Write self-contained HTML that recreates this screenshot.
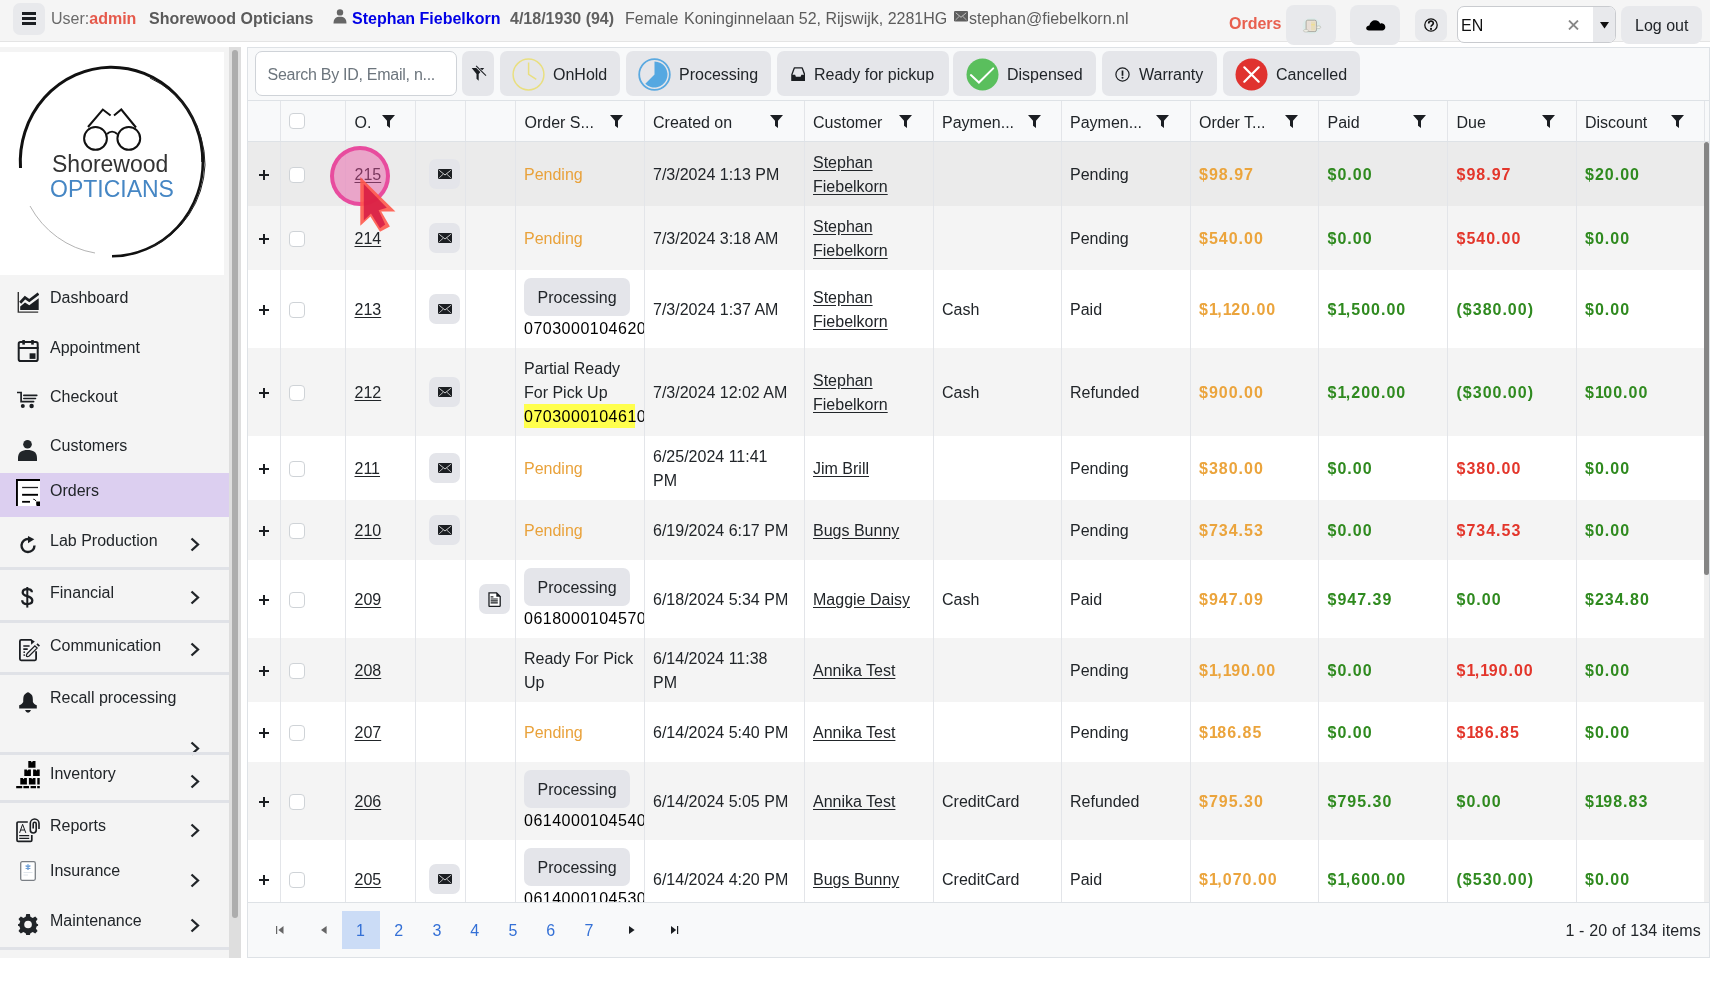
<!DOCTYPE html>
<html><head><meta charset="utf-8"><title>Orders</title><style>*{box-sizing:border-box}
html,body{margin:0;padding:0}
body{width:1710px;height:981px;overflow:hidden;position:relative;font-family:"Liberation Sans",sans-serif;font-size:16px;color:#212529;background:#fff}
.a{position:absolute}
.t{white-space:nowrap}
u{text-decoration:underline;text-underline-offset:2px}
b{font-weight:700}
.am{letter-spacing:1px}
.o{font-style:normal;letter-spacing:-0.5px}
</style></head><body><div id="root" style="position:absolute;left:0;top:0;width:1710px;height:981px;overflow:hidden;will-change:transform">
<div class="a" style="left:0;top:0;width:1710px;height:41px;background:#f5f5f5"></div>
<div class="a" style="left:0;top:41px;width:1710px;height:1px;background:#e4e4e4"></div>
<div class="a" style="left:13px;top:3px;width:32px;height:32px;background:#e8e9ec;border-radius:7px"></div>
<div class="a" style="left:22px;top:12px;width:14px;height:3px;background:#1b1e22"></div>
<div class="a" style="left:22px;top:17px;width:14px;height:3px;background:#1b1e22"></div>
<div class="a" style="left:22px;top:22px;width:14px;height:3px;background:#1b1e22"></div>
<div class="a t " style="left:51px;top:8.96px;font-size:16px;line-height:20px;color:#6a6a6a">User:<b style="color:#e5594b">admin</b></div>
<div class="a t " style="left:149px;top:8.96px;font-size:16px;line-height:20px;color:#5a5a5a"><b>Shorewood Opticians</b></div>
<svg class="a" style="left:333px;top:9px" width="14" height="15" viewBox="0 0 14 15"><circle cx="7" cy="3.4" r="3.2" fill="#666"/><path d="M0.5 14.5 C0.5 9.5 3 7.8 7 7.8 C11 7.8 13.5 9.5 13.5 14.5 Z" fill="#666"/></svg>
<div class="a t " style="left:352px;top:8.96px;font-size:16px;line-height:20px;color:#0000e6"><b>Stephan Fiebelkorn</b></div>
<div class="a t " style="left:510px;top:8.96px;font-size:16px;line-height:20px;color:#606060"><b>4/18/1930 (94)</b></div>
<div class="a t " style="left:625px;top:8.96px;font-size:16px;line-height:20px;color:#5c5c5c">Female</div>
<div class="a t " style="left:684px;top:8.96px;font-size:16px;line-height:20px;color:#5c5c5c">Koninginnelaan 52, Rijswijk, 2281HG</div>
<svg class="a" style="left:954px;top:11px" width="14" height="10.5" viewBox="0 0 14 10.5"><rect x="0" y="0" width="14" height="10.5" rx="1.3" fill="#5e5e5e"/><path d="M1.8 1.8 L7 6.3 L12.2 1.8" stroke="#f0f0f0" stroke-width="0.7" fill="none"/><path d="M1.5 9 L5.3 5.3 M12.5 9 L8.7 5.3" stroke="#f0f0f0" stroke-width="0.6" fill="none"/></svg>
<div class="a t " style="left:969px;top:8.96px;font-size:16px;line-height:20px;color:#5c5c5c">stephan@fiebelkorn.nl</div>
<div class="a t " style="left:1229px;top:14.46px;font-size:16px;line-height:20px;color:#e8604f"><b>Orders</b></div>
<div class="a" style="left:1286px;top:5px;width:50px;height:40px;background:#e8e9ec;border-radius:8px"></div>
<svg class="a" style="left:1301px;top:16px" width="24" height="20" viewBox="0 0 24 20"><ellipse cx="10.5" cy="10" rx="9" ry="8" fill="#d3ede8" opacity=".55"/><rect x="5.1" y="4.2" width="10.3" height="11.4" rx="1.6" fill="#ebe3d6" stroke="#9c9a92" stroke-width=".8"/><rect x="6.3" y="5.6" width="3.2" height="8.8" fill="#e7ddd6"/><rect x="10" y="5.6" width="4.1" height="8.8" fill="#e8ddb9"/><rect x="10.2" y="8.2" width="3.6" height="1.1" fill="#f1e08c"/><ellipse cx="5" cy="14.8" rx="2.7" ry="1.2" fill="#f3f3ea" stroke="#a8a8a0" stroke-width=".5"/><ellipse cx="17.6" cy="11.2" rx="2.2" ry="1.3" fill="#f3f3ea" stroke="#a8a8a0" stroke-width=".5"/></svg>
<div class="a" style="left:1350px;top:5px;width:50px;height:40px;background:#e8e9ec;border-radius:8px"></div>
<svg class="a" style="left:1366px;top:20px" width="20" height="11" viewBox="0 0 20 11"><path d="M3 10.4 C1.2 10.4 0 9.3 0.2 8 C0.4 6.6 1.8 5.6 3.3 5.6 C4 2.2 6.3 0.3 9 0.3 C11.7 0.3 13.6 2 14.2 3.8 C15 3.3 15.8 3.2 16.5 3.4 C18.5 3.9 19.5 5.6 19.3 7.5 C19.1 9.3 17.9 10.4 16.3 10.4 Z" fill="#000"/></svg>
<div class="a" style="left:1415px;top:9px;width:32px;height:32px;background:#e8e9ec;border-radius:7px"></div>
<svg class="a" style="left:1424px;top:18px" width="14" height="14" viewBox="0 0 14 14"><circle cx="7" cy="7" r="6.2" stroke="#111" stroke-width="1.3" fill="none"/><path d="M4.7 5.4 C4.7 2.5 9.3 2.5 9.3 5.2 C9.3 7 7 7.1 7 8.8" stroke="#111" stroke-width="1.7" fill="none"/><circle cx="7" cy="10.9" r="1.1" fill="#111"/></svg>
<div class="a" style="left:1457px;top:6px;width:159px;height:37px;background:#fff;border:1px solid #c9cbcf;border-radius:7px;overflow:hidden"><div class="a" style="left:135px;top:0;width:23px;height:37px;background:#e8e9ec"></div></div>
<div class="a t " style="left:1461px;top:16.46px;font-size:16px;line-height:20px;color:#111">EN</div>
<svg class="a" style="left:1568px;top:20px" width="11" height="10" viewBox="0 0 11 10"><path d="M1 0.5 L10 9.5 M10 0.5 L1 9.5" stroke="#888" stroke-width="1.8"/></svg>
<svg class="a" style="left:1600px;top:22px" width="9" height="7" viewBox="0 0 9 7"><path d="M0 0 H9 L4.5 6.5 Z" fill="#111"/></svg>
<div class="a" style="left:1621px;top:6px;width:81px;height:38px;background:#e8e9ec;border-radius:8px"></div>
<div class="a t " style="left:1635px;top:16.46px;font-size:16px;line-height:20px;color:#212529">Log out</div>
<div class="a" style="left:0;top:47px;width:229px;height:911px;background:#f4f4f4"></div>
<div class="a" style="left:229px;top:47px;width:12px;height:911px;background:#dedede"></div>
<div class="a" style="left:232px;top:50px;width:6px;height:868px;background:#adadad;border-radius:3px"></div>
<div class="a" style="left:0;top:52px;width:224px;height:223px;background:#fff"></div>
<svg class="a" style="left:0;top:52px" width="224" height="223" viewBox="0 52 224 223">
<path d="M20.5 168 A91.5 94.5 0 0 1 110 67.2 A91.5 94.5 0 0 1 202.8 162" stroke="#111" stroke-width="3" fill="none"/>
<path d="M202.8 158 A91.5 94.5 0 0 1 112 256.3" stroke="#111" stroke-width="2.6" fill="none"/>
<path d="M150 78 A92 95 0 0 1 205 165 A92 95 0 0 1 150 248" stroke="#222" stroke-width="1" fill="none"/>
<path d="M30 206 A91.5 94.5 0 0 0 95 253" stroke="#aaa" stroke-width="0.9" fill="none"/>
<circle cx="95.5" cy="138.4" r="11.4" stroke="#111" stroke-width="2" fill="none"/>
<circle cx="128.8" cy="138.4" r="11.4" stroke="#111" stroke-width="2" fill="none"/>
<path d="M107 134 C110 131 114 131 117.3 134" stroke="#111" stroke-width="2" fill="none"/>
<path d="M88 127 L102.8 109.5 L110.6 115.5 M136 127.5 L121.3 109.5 L114 115.5" stroke="#111" stroke-width="2" fill="none" stroke-linejoin="miter"/>
</svg>
<div class="a t " style="left:52px;top:150.23px;font-size:23px;line-height:28px;color:#333">Shorewood</div>
<div class="a t " style="left:50px;top:175.33px;font-size:23px;line-height:28px;color:#4586c4">OPTICIANS</div>
<div class="a" style="left:0;top:473px;width:229px;height:44px;background:#dccff0"></div>
<div class="a t " style="left:50px;top:288.16px;font-size:16px;line-height:20px;color:#212529">Dashboard</div>
<div class="a t " style="left:50px;top:337.86px;font-size:16px;line-height:20px;color:#212529">Appointment</div>
<div class="a t " style="left:50px;top:387.26px;font-size:16px;line-height:20px;color:#212529">Checkout</div>
<div class="a t " style="left:50px;top:436.16px;font-size:16px;line-height:20px;color:#212529">Customers</div>
<div class="a t " style="left:50px;top:481.26px;font-size:16px;line-height:20px;color:#212529">Orders</div>
<div class="a t " style="left:50px;top:531.36px;font-size:16px;line-height:20px;color:#212529">Lab Production</div>
<svg class="a" style="left:190px;top:537px" width="10" height="15" viewBox="0 0 10 15"><path d="M1.5 1.5 L8 7.5 L1.5 13.5" stroke="#212529" stroke-width="2.3" fill="none"/></svg>
<div class="a t " style="left:50px;top:583.46px;font-size:16px;line-height:20px;color:#212529">Financial</div>
<svg class="a" style="left:190px;top:590px" width="10" height="15" viewBox="0 0 10 15"><path d="M1.5 1.5 L8 7.5 L1.5 13.5" stroke="#212529" stroke-width="2.3" fill="none"/></svg>
<div class="a t " style="left:50px;top:636.16px;font-size:16px;line-height:20px;color:#212529">Communication</div>
<svg class="a" style="left:190px;top:642px" width="10" height="15" viewBox="0 0 10 15"><path d="M1.5 1.5 L8 7.5 L1.5 13.5" stroke="#212529" stroke-width="2.3" fill="none"/></svg>
<div class="a t " style="left:50px;top:688.26px;font-size:16px;line-height:20px;color:#212529">Recall processing</div>
<svg class="a" style="left:190px;top:741px" width="10" height="15" viewBox="0 0 10 15"><path d="M1.5 1.5 L8 7.5 L1.5 13.5" stroke="#212529" stroke-width="2.3" fill="none"/></svg>
<div class="a t " style="left:50px;top:763.96px;font-size:16px;line-height:20px;color:#212529">Inventory</div>
<svg class="a" style="left:190px;top:774px" width="10" height="15" viewBox="0 0 10 15"><path d="M1.5 1.5 L8 7.5 L1.5 13.5" stroke="#212529" stroke-width="2.3" fill="none"/></svg>
<div class="a t " style="left:50px;top:816.46px;font-size:16px;line-height:20px;color:#212529">Reports</div>
<svg class="a" style="left:190px;top:823px" width="10" height="15" viewBox="0 0 10 15"><path d="M1.5 1.5 L8 7.5 L1.5 13.5" stroke="#212529" stroke-width="2.3" fill="none"/></svg>
<div class="a t " style="left:50px;top:861.46px;font-size:16px;line-height:20px;color:#212529">Insurance</div>
<svg class="a" style="left:190px;top:872.5px" width="10" height="15" viewBox="0 0 10 15"><path d="M1.5 1.5 L8 7.5 L1.5 13.5" stroke="#212529" stroke-width="2.3" fill="none"/></svg>
<div class="a t " style="left:50px;top:911.36px;font-size:16px;line-height:20px;color:#212529">Maintenance</div>
<svg class="a" style="left:190px;top:917.5px" width="10" height="15" viewBox="0 0 10 15"><path d="M1.5 1.5 L8 7.5 L1.5 13.5" stroke="#212529" stroke-width="2.3" fill="none"/></svg>
<div class="a" style="left:0;top:567px;width:229px;height:3px;background:#e0e2e7"></div>
<div class="a" style="left:0;top:620px;width:229px;height:3px;background:#e0e2e7"></div>
<div class="a" style="left:0;top:672px;width:229px;height:3px;background:#e0e2e7"></div>
<div class="a" style="left:0;top:752px;width:229px;height:3px;background:#e0e2e7"></div>
<div class="a" style="left:0;top:800px;width:229px;height:3px;background:#e0e2e7"></div>
<div class="a" style="left:0;top:947px;width:229px;height:3px;background:#e0e2e7"></div>
<svg class="a" style="left:17px;top:292px" width="22" height="21" viewBox="0 0 22 21"><path d="M1.3 0 V20.1 H21.2" stroke="#333" stroke-width="1.4" fill="none"/><path d="M3.2 10.8 L8 5.6 L12.3 8.6 L21.5 1.6" stroke="#1b1e22" stroke-width="2.8" fill="none" stroke-linejoin="miter"/><path d="M3.2 14.6 L8 10.4 L12.3 13.3 L21.7 6.2 V17.9 H3.2 Z" fill="#1b1e22"/></svg>
<svg class="a" style="left:17px;top:340px" width="22" height="23" viewBox="0 0 22 23"><rect x="1.7" y="2.1" width="19" height="18.9" rx="1.8" stroke="#1b1e22" stroke-width="2" fill="none"/><path d="M1 8 H21.5" stroke="#1b1e22" stroke-width="2"/><rect x="5.3" y="0" width="2.6" height="4.6" fill="#1b1e22"/><rect x="14.2" y="0" width="2.6" height="4.6" fill="#1b1e22"/><rect x="12.6" y="13.3" width="5.9" height="5.6" fill="#1b1e22"/></svg>
<svg class="a" style="left:17px;top:391px" width="21" height="18" viewBox="0 0 21 18"><path d="M0.4 1.5 H4.1 V10.6 H16.6" stroke="#1b1e22" stroke-width="1.7" fill="none" stroke-linecap="round"/><path d="M6.8 4.4 H19.8 M6.8 7.5 H18.5" stroke="#1b1e22" stroke-width="1.6" stroke-linecap="round"/><circle cx="5.8" cy="15" r="2" fill="#1b1e22"/><circle cx="14.6" cy="15" r="2.2" fill="#1b1e22"/></svg>
<svg class="a" style="left:18px;top:440px" width="19" height="21" viewBox="0 0 19 21"><circle cx="9.5" cy="4.3" r="4.3" fill="#212529"/><path d="M0 21 V18 C0 12 4 10 9.5 10 C15 10 19 12 19 18 V21 Z" fill="#212529"/></svg>
<svg class="a" style="left:16px;top:479px" width="24" height="27" viewBox="0 0 24 27"><rect x="0" y="0" width="24" height="27" fill="#fff"/><path d="M0.95 27 V0.95 H24" stroke="#000" stroke-width="1.9" fill="none"/><path d="M6.1 8.5 H22" stroke="#222" stroke-width="1.3"/><path d="M6.1 15.8 H22" stroke="#000" stroke-width="1.9"/><path d="M6.1 22.8 H14" stroke="#000" stroke-width="1.8"/><path d="M17.3 20.2 Q19 20.2 20 22" stroke="#000" stroke-width="1" fill="none"/><path d="M20.2 22.4 H24 V27 H21 Q20.2 27 20.2 25 Z" fill="#000"/></svg>
<svg class="a" style="left:20px;top:536px" width="17" height="18" viewBox="0 0 17 18"><path d="M14.5 9.6 A6.5 6.5 0 1 1 8.6 3.1" stroke="#1b1e22" stroke-width="2.4" fill="none"/><path d="M8 0 L14.3 3.3 L8 7.2 Z" fill="#1b1e22"/></svg>
<svg class="a" style="left:21px;top:586px" width="13" height="22" viewBox="0 0 13 22"><path d="M10.9 6.3 C10.9 4 9 3.1 6.3 3.1 C3.4 3.1 1.7 4.4 1.7 6.4 C1.7 11 11.3 9.4 11.3 14.6 C11.3 17 9.3 18.1 6.3 18.1 C3 18.1 1.2 16.8 1.2 14.2" stroke="#1b1e22" stroke-width="2.3" fill="none"/><path d="M6.3 1 V21.6" stroke="#1b1e22" stroke-width="2"/></svg>
<svg class="a" style="left:19px;top:639px" width="22" height="23" viewBox="0 0 22 23"><path d="M12.4 0.9 H2.2 Q0.9 0.9 0.9 2.2 V20.1 Q0.9 21.3 2.2 21.3 H15.9 Q17.1 21.3 17.1 20.1 V12.3" stroke="#1b1e22" stroke-width="1.8" fill="none"/><path d="M11.8 0 L15.8 2.5 L12.2 5.8 Z" fill="#1b1e22"/><path d="M4.3 7 H10.6 M4.3 10.1 H8.7" stroke="#1b1e22" stroke-width="1.6"/><circle cx="5.2" cy="13.2" r="0.85" fill="#1b1e22"/><circle cx="5.2" cy="16.1" r="0.85" fill="#1b1e22"/><path d="M8 14.8 L15.9 6.9 L18.1 9.1 L10.2 17 Q8.4 18 7.6 17.3 Q7 16.4 8 14.8 Z" stroke="#1b1e22" stroke-width="1.3" fill="none"/><path d="M17.4 5.4 L18.6 4.2 L21 6.6 L19.8 7.8 Z" fill="#1b1e22"/></svg>
<svg class="a" style="left:19px;top:692px" width="19" height="22" viewBox="0 0 19 22"><path d="M9 0.3 C10 0.3 11 1.5 12.6 2.8 C13.7 3.8 13.9 6 13.9 10 C14.5 11.6 16 12.6 17.8 13.2 V16.5 H0.2 V13.2 C2 12.6 3.5 11.6 4.2 10 C4.2 6 4.4 3.8 5.4 2.8 C7 1.5 8 0.3 9 0.3 Z" fill="#1b1e22"/><path d="M6 18 H12 Q11 20.7 9 20.7 Q7 20.7 6 18 Z" fill="#1b1e22"/></svg>
<svg class="a" style="left:16px;top:761px" width="25" height="28" viewBox="0 0 25 28"><path d="M12.3 0.1 H15.0 L15.9 1.4 L16.8 0.1 H19.5 V6.7 H12.3 Z M8.3 8.4 H10.8 L11.6 9.7 L12.4 8.4 H14.9 V15.0 H8.3 Z M17.1 8.4 H19.6 L20.4 9.7 L21.2 8.4 H23.7 V15.0 H17.1 Z M4.3 17.0 H6.8 L7.6 18.3 L8.4 17.0 H10.9 V23.6 H4.3 Z M12.9 17.0 H15.4 L16.2 18.3 L17.0 17.0 H19.5 V23.6 H12.9 Z M21.3 17 H23.7 V23.6 H21.3 Z" fill="#000"/><path d="M0.2 26.2 H6.2 M7.4 26.2 H13 M14.6 26.2 H20 M21.2 26.2 H23.8" stroke="#000" stroke-width="2.2"/></svg>
<svg class="a" style="left:16px;top:818px" width="25" height="25" viewBox="0 0 25 25"><path d="M11.8 4 H2.2 Q1 4 1 5.2 V22.2 Q1 23.4 2.2 23.4 H14.6 Q15.8 23.4 15.8 22.2 V16.9" stroke="#1b1e22" stroke-width="1.7" fill="none"/><path d="M3.6 14.9 L6.6 6.3 L9.8 14.9 M4.7 12 H8.6" stroke="#1b1e22" stroke-width="1" fill="none"/><path d="M3.2 17.7 H13.2 M3.2 20.4 H13.2" stroke="#1b1e22" stroke-width="1.3"/><path d="M23 10.9 V5.3 A4.35 4.35 0 0 0 14.3 5.3 V12 A2.95 2.95 0 0 0 20.2 12 V5.8 A1.5 1.5 0 0 0 17.2 5.8 V10.6" stroke="#1b1e22" stroke-width="1.6" fill="none"/></svg>
<svg class="a" style="left:20px;top:861px" width="16" height="20" viewBox="0 0 16 20"><rect x="0.7" y="0.7" width="14.6" height="18.6" rx="1.5" stroke="#7a7f85" stroke-width="1.3" fill="#fff"/><path d="M8 3.3 V8.9 M5.6 4.7 L10.4 7.5 M10.4 4.7 L5.6 7.5" stroke="#6e9fd6" stroke-width="1.4"/><path d="M3.5 11.5 H12.5 M3.5 14 H8" stroke="#dde3ea" stroke-width="0.9"/></svg>
<svg class="a" style="left:18px;top:914px" width="21" height="22" viewBox="0 0 21.95 22.99"><path fill="#212529" fill-rule="evenodd" d="M8.6 0 H12.4 L13 3 L15.4 4.2 L18 2.5 L20.5 5.2 L18.7 7.8 L19.6 10.2 L21 10.6 V12.4 L19.6 12.8 L18.7 15.2 L20.5 17.8 L18 20.5 L15.4 18.8 L13 20 L12.4 22 H8.6 L8 20 L5.6 18.8 L3 20.5 L0.5 17.8 L2.3 15.2 L1.4 12.8 L0 12.4 V10.6 L1.4 10.2 L2.3 7.8 L0.5 5.2 L3 2.5 L5.6 4.2 L8 3 Z M10.5 7 A4 4 0 1 0 10.5 15 A4 4 0 1 0 10.5 7 Z"/></svg>
<div class="a" style="left:247px;top:47px;width:1463px;height:911px;background:#f8f9fa;border:1px solid #dee2e6"></div>
<div class="a" style="left:255px;top:51px;width:202px;height:45px;background:#fff;border:1px solid #cfd3d8;border-radius:7px"></div>
<div class="a t " style="left:267.5px;top:64.66px;font-size:16px;line-height:20px;color:#6c757d;letter-spacing:-0.27px">Search By ID, Email, n...</div>
<div class="a" style="left:462px;top:51px;width:32px;height:45px;background:#e5e6ea;border-radius:7px"></div>
<svg class="a" style="left:470px;top:65px" width="17" height="17" viewBox="0 0 17 17"><path d="M1.7 3.1 H14.2 L8.7 8.9 V15.7 L6.5 13.8 V8.9 Z" fill="#1b1e22"/><path d="M5.3 0.2 L16.6 11.5" stroke="#e5e6ea" stroke-width="2.6"/><path d="M6.1 0.8 L16 10.7" stroke="#1b1e22" stroke-width="1.05"/></svg>
<div class="a" style="left:500px;top:51px;width:120px;height:45px;background:#e5e6ea;border-radius:7px"></div>
<svg class="a" style="left:512px;top:57.5px" width="33" height="33" viewBox="0 0 33 33"><circle cx="16.5" cy="16.5" r="15.4" stroke="#e9df80" stroke-width="1.5" fill="none"/><path d="M16.6 4.5 V16.3 L24.3 21.3" stroke="#e9df80" stroke-width="1.5" fill="none"/></svg>
<div class="a t " style="left:553px;top:64.66px;font-size:16px;line-height:20px;color:#212529">OnHold</div>
<div class="a" style="left:626px;top:51px;width:145px;height:45px;background:#e5e6ea;border-radius:7px"></div>
<svg class="a" style="left:638px;top:57.5px" width="33" height="33" viewBox="0 0 33 33"><circle cx="16.5" cy="16.5" r="15.3" stroke="#5aa9e0" stroke-width="1.8" fill="none"/><path d="M16.5 3.5 A13 13 0 1 1 7.3 25.7 L16.5 16.5 Z" fill="#55a8e1"/></svg>
<div class="a t " style="left:679px;top:64.66px;font-size:16px;line-height:20px;color:#212529">Processing</div>
<div class="a" style="left:777px;top:51px;width:172px;height:45px;background:#e5e6ea;border-radius:7px"></div>
<svg class="a" style="left:790.5px;top:66.5px" width="14.5" height="14.5" viewBox="0 0 14.5 14.5"><path d="M3.3 0.9 H11.2 L13.6 7.4 V13.4 H0.9 V7.4 Z" stroke="#1b1e22" stroke-width="1.3" fill="none" stroke-linejoin="round"/><path d="M0.9 7.7 H4.1 L4.9 9.7 H9.6 L10.4 7.7 H13.6 V13.6 Q13.6 14.1 13.1 14.1 H1.4 Q0.9 14.1 0.9 13.6 Z" fill="#1b1e22"/></svg>
<div class="a t " style="left:814px;top:64.66px;font-size:16px;line-height:20px;color:#212529">Ready for pickup</div>
<div class="a" style="left:953px;top:51px;width:143px;height:45px;background:#e5e6ea;border-radius:7px"></div>
<svg class="a" style="left:966px;top:57.5px" width="33" height="33" viewBox="0 0 33 33"><circle cx="16.5" cy="16.5" r="16" fill="#5abf5d"/><path d="M4.9 17.1 L12.9 24.5 L27.2 10.4" stroke="#fff" stroke-width="2" fill="none" stroke-linecap="round"/></svg>
<div class="a t " style="left:1007px;top:64.66px;font-size:16px;line-height:20px;color:#212529">Dispensed</div>
<div class="a" style="left:1102px;top:51px;width:115px;height:45px;background:#e5e6ea;border-radius:7px"></div>
<svg class="a" style="left:1115px;top:67px" width="15" height="15" viewBox="0 0 15 15"><circle cx="7.5" cy="7.5" r="6.6" stroke="#1b1e22" stroke-width="1.2" fill="none"/><path d="M7.5 3.5 V8.8" stroke="#1b1e22" stroke-width="1.7"/><circle cx="7.5" cy="10.8" r="1" fill="#1b1e22"/></svg>
<div class="a t " style="left:1139px;top:64.66px;font-size:16px;line-height:20px;color:#212529">Warranty</div>
<div class="a" style="left:1223px;top:51px;width:137px;height:45px;background:#e5e6ea;border-radius:7px"></div>
<svg class="a" style="left:1235px;top:57.5px" width="33" height="33" viewBox="0 0 33 33"><circle cx="16.5" cy="16.5" r="16" fill="#e0322f"/><path d="M9.3 9.3 L23.7 23.7 M23.7 9.3 L9.3 23.7" stroke="#fff" stroke-width="2.2" stroke-linecap="round"/></svg>
<div class="a t " style="left:1276px;top:64.66px;font-size:16px;line-height:20px;color:#212529">Cancelled</div>
<div class="a" style="left:248px;top:100px;width:1461px;height:1px;background:#dee2e6"></div>
<div class="a" style="left:248px;top:101px;width:1456px;height:40px;background:#f8f9fa"></div>
<div class="a" style="left:248px;top:141px;width:1461px;height:1px;background:#dee2e6"></div>
<div class="a" style="left:248px;top:142px;width:1456px;height:760px;overflow:hidden">
<div class="a" style="left:0;top:0px;width:1456px;height:64px;background:#ebebeb"></div>
<div class="a" style="left:11px;top:32.0px;width:10px;height:2px;background:#1b1e22"></div>
<div class="a" style="left:15px;top:28.0px;width:2px;height:10px;background:#1b1e22"></div>
<div class="a" style="left:41px;top:24.5px;width:16px;height:16px;background:#fff;border:1px solid #cfd3d7;border-radius:4px"></div>
<div class="a t " style="left:106.5px;top:23.26px;font-size:16px;line-height:20px;color:#212529"><u>215</u></div>
<div class="a" style="left:181px;top:17.0px;width:31px;height:30px;background:#e4e5ea;border-radius:7px"></div>
<svg class="a" style="left:189.5px;top:27.0px" width="14" height="10" viewBox="0 0 14 10"><rect x="0" y="0" width="14" height="10" rx="1.2" fill="#1b1e22"/><path d="M1.2 1.3 L7 6 L12.8 1.3" stroke="#fff" stroke-width="0.8" fill="none"/><path d="M1.2 8.8 L5.2 5.2 M12.8 8.8 L8.8 5.2" stroke="#fff" stroke-width="0.7" fill="none"/></svg>
<div class="a t " style="left:276px;top:23.26px;font-size:16px;line-height:20px;color:#e9a23b">Pending</div>
<div class="a t " style="left:405px;top:23.26px;font-size:16px;line-height:20px;color:#212529">7/3/2024 1:13 PM</div>
<div class="a t " style="left:565px;top:11.46px;font-size:16px;line-height:20px;color:#212529"><u>Stephan</u></div>
<div class="a t " style="left:565px;top:35.46px;font-size:16px;line-height:20px;color:#212529"><u>Fiebelkorn</u></div>
<div class="a t " style="left:822px;top:23.26px;font-size:16px;line-height:20px;color:#212529">Pending</div>
<div class="a t " style="left:951px;top:23.26px;font-size:16px;line-height:20px;color:#eba43c"><b class="am">$98.97</b></div>
<div class="a t " style="left:1079.5px;top:23.26px;font-size:16px;line-height:20px;color:#2f8a1f"><b class="am">$0.00</b></div>
<div class="a t " style="left:1208.5px;top:23.26px;font-size:16px;line-height:20px;color:#e3362b"><b class="am">$98.97</b></div>
<div class="a t " style="left:1337px;top:23.26px;font-size:16px;line-height:20px;color:#2f8a1f"><b class="am">$20.00</b></div>
<div class="a" style="left:0;top:64px;width:1456px;height:64px;background:#f4f4f4"></div>
<div class="a" style="left:11px;top:96.0px;width:10px;height:2px;background:#1b1e22"></div>
<div class="a" style="left:15px;top:92.0px;width:2px;height:10px;background:#1b1e22"></div>
<div class="a" style="left:41px;top:88.5px;width:16px;height:16px;background:#fff;border:1px solid #cfd3d7;border-radius:4px"></div>
<div class="a t " style="left:106.5px;top:87.26px;font-size:16px;line-height:20px;color:#212529"><u>214</u></div>
<div class="a" style="left:181px;top:81.0px;width:31px;height:30px;background:#e4e5ea;border-radius:7px"></div>
<svg class="a" style="left:189.5px;top:91.0px" width="14" height="10" viewBox="0 0 14 10"><rect x="0" y="0" width="14" height="10" rx="1.2" fill="#1b1e22"/><path d="M1.2 1.3 L7 6 L12.8 1.3" stroke="#fff" stroke-width="0.8" fill="none"/><path d="M1.2 8.8 L5.2 5.2 M12.8 8.8 L8.8 5.2" stroke="#fff" stroke-width="0.7" fill="none"/></svg>
<div class="a t " style="left:276px;top:87.26px;font-size:16px;line-height:20px;color:#e9a23b">Pending</div>
<div class="a t " style="left:405px;top:87.26px;font-size:16px;line-height:20px;color:#212529">7/3/2024 3:18 AM</div>
<div class="a t " style="left:565px;top:75.46px;font-size:16px;line-height:20px;color:#212529"><u>Stephan</u></div>
<div class="a t " style="left:565px;top:99.46px;font-size:16px;line-height:20px;color:#212529"><u>Fiebelkorn</u></div>
<div class="a t " style="left:822px;top:87.26px;font-size:16px;line-height:20px;color:#212529">Pending</div>
<div class="a t " style="left:951px;top:87.26px;font-size:16px;line-height:20px;color:#eba43c"><b class="am">$540.00</b></div>
<div class="a t " style="left:1079.5px;top:87.26px;font-size:16px;line-height:20px;color:#2f8a1f"><b class="am">$0.00</b></div>
<div class="a t " style="left:1208.5px;top:87.26px;font-size:16px;line-height:20px;color:#e3362b"><b class="am">$540.00</b></div>
<div class="a t " style="left:1337px;top:87.26px;font-size:16px;line-height:20px;color:#2f8a1f"><b class="am">$0.00</b></div>
<div class="a" style="left:0;top:128px;width:1456px;height:78px;background:#ffffff"></div>
<div class="a" style="left:11px;top:167.0px;width:10px;height:2px;background:#1b1e22"></div>
<div class="a" style="left:15px;top:163.0px;width:2px;height:10px;background:#1b1e22"></div>
<div class="a" style="left:41px;top:159.5px;width:16px;height:16px;background:#fff;border:1px solid #cfd3d7;border-radius:4px"></div>
<div class="a t " style="left:106.5px;top:158.26px;font-size:16px;line-height:20px;color:#212529"><u>213</u></div>
<div class="a" style="left:181px;top:152.0px;width:31px;height:30px;background:#e4e5ea;border-radius:7px"></div>
<svg class="a" style="left:189.5px;top:162.0px" width="14" height="10" viewBox="0 0 14 10"><rect x="0" y="0" width="14" height="10" rx="1.2" fill="#1b1e22"/><path d="M1.2 1.3 L7 6 L12.8 1.3" stroke="#fff" stroke-width="0.8" fill="none"/><path d="M1.2 8.8 L5.2 5.2 M12.8 8.8 L8.8 5.2" stroke="#fff" stroke-width="0.7" fill="none"/></svg>
<div class="a" style="left:276px;top:136px;width:106px;height:38px;background:#e4e5ea;border-radius:7px"></div>
<div class="a t " style="left:289.5px;top:146.46px;font-size:16px;line-height:20px;color:#212529">Processing</div>
<div class="a" style="left:276px;top:174px;width:120px;height:24px;overflow:hidden"><div class="t" style="position:absolute;left:0;top:3px;line-height:20px;color:#000;white-space:nowrap;letter-spacing:0.5px">0703000104620</div></div>
<div class="a t " style="left:405px;top:158.26px;font-size:16px;line-height:20px;color:#212529">7/3/2024 1:37 AM</div>
<div class="a t " style="left:565px;top:146.46px;font-size:16px;line-height:20px;color:#212529"><u>Stephan</u></div>
<div class="a t " style="left:565px;top:170.46px;font-size:16px;line-height:20px;color:#212529"><u>Fiebelkorn</u></div>
<div class="a t " style="left:694px;top:158.26px;font-size:16px;line-height:20px;color:#212529">Cash</div>
<div class="a t " style="left:822px;top:158.26px;font-size:16px;line-height:20px;color:#212529">Paid</div>
<div class="a t " style="left:951px;top:158.26px;font-size:16px;line-height:20px;color:#eba43c"><b class="am">$<i class="o">1</i>,<i class="o">1</i>20.00</b></div>
<div class="a t " style="left:1079.5px;top:158.26px;font-size:16px;line-height:20px;color:#2f8a1f"><b class="am">$<i class="o">1</i>,500.00</b></div>
<div class="a t " style="left:1208.5px;top:158.26px;font-size:16px;line-height:20px;color:#2f8a1f"><b class="am">($380.00)</b></div>
<div class="a t " style="left:1337px;top:158.26px;font-size:16px;line-height:20px;color:#2f8a1f"><b class="am">$0.00</b></div>
<div class="a" style="left:0;top:206px;width:1456px;height:88px;background:#f4f4f4"></div>
<div class="a" style="left:11px;top:250.0px;width:10px;height:2px;background:#1b1e22"></div>
<div class="a" style="left:15px;top:246.0px;width:2px;height:10px;background:#1b1e22"></div>
<div class="a" style="left:41px;top:242.5px;width:16px;height:16px;background:#fff;border:1px solid #cfd3d7;border-radius:4px"></div>
<div class="a t " style="left:106.5px;top:241.26px;font-size:16px;line-height:20px;color:#212529"><u>212</u></div>
<div class="a" style="left:181px;top:235.0px;width:31px;height:30px;background:#e4e5ea;border-radius:7px"></div>
<svg class="a" style="left:189.5px;top:245.0px" width="14" height="10" viewBox="0 0 14 10"><rect x="0" y="0" width="14" height="10" rx="1.2" fill="#1b1e22"/><path d="M1.2 1.3 L7 6 L12.8 1.3" stroke="#fff" stroke-width="0.8" fill="none"/><path d="M1.2 8.8 L5.2 5.2 M12.8 8.8 L8.8 5.2" stroke="#fff" stroke-width="0.7" fill="none"/></svg>
<div class="a t " style="left:276px;top:217.46px;font-size:16px;line-height:20px;color:#212529">Partial Ready</div>
<div class="a t " style="left:276px;top:241.46px;font-size:16px;line-height:20px;color:#212529">For Pick Up</div>
<div class="a" style="left:276px;top:262px;width:120px;height:24px;overflow:hidden"><div class="a" style="left:0;top:0;width:111px;height:24px;background:#ffff4d"></div><div class="t" style="position:absolute;left:0;top:3px;line-height:20px;color:#000;white-space:nowrap;letter-spacing:0.5px">0703000104610</div></div>
<div class="a t " style="left:405px;top:241.26px;font-size:16px;line-height:20px;color:#212529">7/3/2024 12:02 AM</div>
<div class="a t " style="left:565px;top:229.46px;font-size:16px;line-height:20px;color:#212529"><u>Stephan</u></div>
<div class="a t " style="left:565px;top:253.46px;font-size:16px;line-height:20px;color:#212529"><u>Fiebelkorn</u></div>
<div class="a t " style="left:694px;top:241.26px;font-size:16px;line-height:20px;color:#212529">Cash</div>
<div class="a t " style="left:822px;top:241.26px;font-size:16px;line-height:20px;color:#212529">Refunded</div>
<div class="a t " style="left:951px;top:241.26px;font-size:16px;line-height:20px;color:#eba43c"><b class="am">$900.00</b></div>
<div class="a t " style="left:1079.5px;top:241.26px;font-size:16px;line-height:20px;color:#2f8a1f"><b class="am">$<i class="o">1</i>,200.00</b></div>
<div class="a t " style="left:1208.5px;top:241.26px;font-size:16px;line-height:20px;color:#2f8a1f"><b class="am">($300.00)</b></div>
<div class="a t " style="left:1337px;top:241.26px;font-size:16px;line-height:20px;color:#2f8a1f"><b class="am">$<i class="o">1</i>00.00</b></div>
<div class="a" style="left:0;top:294px;width:1456px;height:64px;background:#ffffff"></div>
<div class="a" style="left:11px;top:326.0px;width:10px;height:2px;background:#1b1e22"></div>
<div class="a" style="left:15px;top:322.0px;width:2px;height:10px;background:#1b1e22"></div>
<div class="a" style="left:41px;top:318.5px;width:16px;height:16px;background:#fff;border:1px solid #cfd3d7;border-radius:4px"></div>
<div class="a t " style="left:106.5px;top:317.26px;font-size:16px;line-height:20px;color:#212529"><u>211</u></div>
<div class="a" style="left:181px;top:311.0px;width:31px;height:30px;background:#e4e5ea;border-radius:7px"></div>
<svg class="a" style="left:189.5px;top:321.0px" width="14" height="10" viewBox="0 0 14 10"><rect x="0" y="0" width="14" height="10" rx="1.2" fill="#1b1e22"/><path d="M1.2 1.3 L7 6 L12.8 1.3" stroke="#fff" stroke-width="0.8" fill="none"/><path d="M1.2 8.8 L5.2 5.2 M12.8 8.8 L8.8 5.2" stroke="#fff" stroke-width="0.7" fill="none"/></svg>
<div class="a t " style="left:276px;top:317.26px;font-size:16px;line-height:20px;color:#e9a23b">Pending</div>
<div class="a t " style="left:405px;top:305.46px;font-size:16px;line-height:20px;color:#212529">6/25/2024 11:41</div>
<div class="a t " style="left:405px;top:329.46px;font-size:16px;line-height:20px;color:#212529">PM</div>
<div class="a t " style="left:565px;top:317.26px;font-size:16px;line-height:20px;color:#212529"><u>Jim Brill</u></div>
<div class="a t " style="left:822px;top:317.26px;font-size:16px;line-height:20px;color:#212529">Pending</div>
<div class="a t " style="left:951px;top:317.26px;font-size:16px;line-height:20px;color:#eba43c"><b class="am">$380.00</b></div>
<div class="a t " style="left:1079.5px;top:317.26px;font-size:16px;line-height:20px;color:#2f8a1f"><b class="am">$0.00</b></div>
<div class="a t " style="left:1208.5px;top:317.26px;font-size:16px;line-height:20px;color:#e3362b"><b class="am">$380.00</b></div>
<div class="a t " style="left:1337px;top:317.26px;font-size:16px;line-height:20px;color:#2f8a1f"><b class="am">$0.00</b></div>
<div class="a" style="left:0;top:358px;width:1456px;height:60px;background:#f4f4f4"></div>
<div class="a" style="left:11px;top:388.0px;width:10px;height:2px;background:#1b1e22"></div>
<div class="a" style="left:15px;top:384.0px;width:2px;height:10px;background:#1b1e22"></div>
<div class="a" style="left:41px;top:380.5px;width:16px;height:16px;background:#fff;border:1px solid #cfd3d7;border-radius:4px"></div>
<div class="a t " style="left:106.5px;top:379.26px;font-size:16px;line-height:20px;color:#212529"><u>210</u></div>
<div class="a" style="left:181px;top:373.0px;width:31px;height:30px;background:#e4e5ea;border-radius:7px"></div>
<svg class="a" style="left:189.5px;top:383.0px" width="14" height="10" viewBox="0 0 14 10"><rect x="0" y="0" width="14" height="10" rx="1.2" fill="#1b1e22"/><path d="M1.2 1.3 L7 6 L12.8 1.3" stroke="#fff" stroke-width="0.8" fill="none"/><path d="M1.2 8.8 L5.2 5.2 M12.8 8.8 L8.8 5.2" stroke="#fff" stroke-width="0.7" fill="none"/></svg>
<div class="a t " style="left:276px;top:379.26px;font-size:16px;line-height:20px;color:#e9a23b">Pending</div>
<div class="a t " style="left:405px;top:379.26px;font-size:16px;line-height:20px;color:#212529">6/19/2024 6:17 PM</div>
<div class="a t " style="left:565px;top:379.26px;font-size:16px;line-height:20px;color:#212529"><u>Bugs Bunny</u></div>
<div class="a t " style="left:822px;top:379.26px;font-size:16px;line-height:20px;color:#212529">Pending</div>
<div class="a t " style="left:951px;top:379.26px;font-size:16px;line-height:20px;color:#eba43c"><b class="am">$734.53</b></div>
<div class="a t " style="left:1079.5px;top:379.26px;font-size:16px;line-height:20px;color:#2f8a1f"><b class="am">$0.00</b></div>
<div class="a t " style="left:1208.5px;top:379.26px;font-size:16px;line-height:20px;color:#e3362b"><b class="am">$734.53</b></div>
<div class="a t " style="left:1337px;top:379.26px;font-size:16px;line-height:20px;color:#2f8a1f"><b class="am">$0.00</b></div>
<div class="a" style="left:0;top:418px;width:1456px;height:78px;background:#ffffff"></div>
<div class="a" style="left:11px;top:457.0px;width:10px;height:2px;background:#1b1e22"></div>
<div class="a" style="left:15px;top:453.0px;width:2px;height:10px;background:#1b1e22"></div>
<div class="a" style="left:41px;top:449.5px;width:16px;height:16px;background:#fff;border:1px solid #cfd3d7;border-radius:4px"></div>
<div class="a t " style="left:106.5px;top:448.26px;font-size:16px;line-height:20px;color:#212529"><u>209</u></div>
<div class="a" style="left:231px;top:442.0px;width:31px;height:30px;background:#e4e5ea;border-radius:7px"></div>
<svg class="a" style="left:240px;top:449.5px" width="13" height="15" viewBox="0 0 13 15"><path d="M1 0.9 H8.6 L12.2 4.5 V13.7 Q12.2 14.4 11.5 14.4 H1.7 Q1 14.4 1 13.7 Z" stroke="#1b1e22" stroke-width="1.3" fill="#fff"/><path d="M8.3 0.6 V4.8 H12.5 Z" fill="#1b1e22"/><path d="M2.6 4.9 H5.4 M2.6 7 H9.8 M2.6 8.9 H9.8 M2.6 10.9 H9.8" stroke="#1b1e22" stroke-width="1.2"/></svg>
<div class="a" style="left:276px;top:426px;width:106px;height:38px;background:#e4e5ea;border-radius:7px"></div>
<div class="a t " style="left:289.5px;top:436.46px;font-size:16px;line-height:20px;color:#212529">Processing</div>
<div class="a" style="left:276px;top:464px;width:120px;height:24px;overflow:hidden"><div class="t" style="position:absolute;left:0;top:3px;line-height:20px;color:#000;white-space:nowrap;letter-spacing:0.5px">0618000104570</div></div>
<div class="a t " style="left:405px;top:448.26px;font-size:16px;line-height:20px;color:#212529">6/18/2024 5:34 PM</div>
<div class="a t " style="left:565px;top:448.26px;font-size:16px;line-height:20px;color:#212529"><u>Maggie Daisy</u></div>
<div class="a t " style="left:694px;top:448.26px;font-size:16px;line-height:20px;color:#212529">Cash</div>
<div class="a t " style="left:822px;top:448.26px;font-size:16px;line-height:20px;color:#212529">Paid</div>
<div class="a t " style="left:951px;top:448.26px;font-size:16px;line-height:20px;color:#eba43c"><b class="am">$947.09</b></div>
<div class="a t " style="left:1079.5px;top:448.26px;font-size:16px;line-height:20px;color:#2f8a1f"><b class="am">$947.39</b></div>
<div class="a t " style="left:1208.5px;top:448.26px;font-size:16px;line-height:20px;color:#2f8a1f"><b class="am">$0.00</b></div>
<div class="a t " style="left:1337px;top:448.26px;font-size:16px;line-height:20px;color:#2f8a1f"><b class="am">$234.80</b></div>
<div class="a" style="left:0;top:496px;width:1456px;height:64px;background:#f4f4f4"></div>
<div class="a" style="left:11px;top:528.0px;width:10px;height:2px;background:#1b1e22"></div>
<div class="a" style="left:15px;top:524.0px;width:2px;height:10px;background:#1b1e22"></div>
<div class="a" style="left:41px;top:520.5px;width:16px;height:16px;background:#fff;border:1px solid #cfd3d7;border-radius:4px"></div>
<div class="a t " style="left:106.5px;top:519.26px;font-size:16px;line-height:20px;color:#212529"><u>208</u></div>
<div class="a t " style="left:276px;top:507.46px;font-size:16px;line-height:20px;color:#212529">Ready For Pick</div>
<div class="a t " style="left:276px;top:531.46px;font-size:16px;line-height:20px;color:#212529">Up</div>
<div class="a t " style="left:405px;top:507.46px;font-size:16px;line-height:20px;color:#212529">6/14/2024 11:38</div>
<div class="a t " style="left:405px;top:531.46px;font-size:16px;line-height:20px;color:#212529">PM</div>
<div class="a t " style="left:565px;top:519.26px;font-size:16px;line-height:20px;color:#212529"><u>Annika Test</u></div>
<div class="a t " style="left:822px;top:519.26px;font-size:16px;line-height:20px;color:#212529">Pending</div>
<div class="a t " style="left:951px;top:519.26px;font-size:16px;line-height:20px;color:#eba43c"><b class="am">$<i class="o">1</i>,<i class="o">1</i>90.00</b></div>
<div class="a t " style="left:1079.5px;top:519.26px;font-size:16px;line-height:20px;color:#2f8a1f"><b class="am">$0.00</b></div>
<div class="a t " style="left:1208.5px;top:519.26px;font-size:16px;line-height:20px;color:#e3362b"><b class="am">$<i class="o">1</i>,<i class="o">1</i>90.00</b></div>
<div class="a t " style="left:1337px;top:519.26px;font-size:16px;line-height:20px;color:#2f8a1f"><b class="am">$0.00</b></div>
<div class="a" style="left:0;top:560px;width:1456px;height:60px;background:#ffffff"></div>
<div class="a" style="left:11px;top:590.0px;width:10px;height:2px;background:#1b1e22"></div>
<div class="a" style="left:15px;top:586.0px;width:2px;height:10px;background:#1b1e22"></div>
<div class="a" style="left:41px;top:582.5px;width:16px;height:16px;background:#fff;border:1px solid #cfd3d7;border-radius:4px"></div>
<div class="a t " style="left:106.5px;top:581.26px;font-size:16px;line-height:20px;color:#212529"><u>207</u></div>
<div class="a t " style="left:276px;top:581.26px;font-size:16px;line-height:20px;color:#e9a23b">Pending</div>
<div class="a t " style="left:405px;top:581.26px;font-size:16px;line-height:20px;color:#212529">6/14/2024 5:40 PM</div>
<div class="a t " style="left:565px;top:581.26px;font-size:16px;line-height:20px;color:#212529"><u>Annika Test</u></div>
<div class="a t " style="left:822px;top:581.26px;font-size:16px;line-height:20px;color:#212529">Pending</div>
<div class="a t " style="left:951px;top:581.26px;font-size:16px;line-height:20px;color:#eba43c"><b class="am">$<i class="o">1</i>86.85</b></div>
<div class="a t " style="left:1079.5px;top:581.26px;font-size:16px;line-height:20px;color:#2f8a1f"><b class="am">$0.00</b></div>
<div class="a t " style="left:1208.5px;top:581.26px;font-size:16px;line-height:20px;color:#e3362b"><b class="am">$<i class="o">1</i>86.85</b></div>
<div class="a t " style="left:1337px;top:581.26px;font-size:16px;line-height:20px;color:#2f8a1f"><b class="am">$0.00</b></div>
<div class="a" style="left:0;top:620px;width:1456px;height:78px;background:#f4f4f4"></div>
<div class="a" style="left:11px;top:659.0px;width:10px;height:2px;background:#1b1e22"></div>
<div class="a" style="left:15px;top:655.0px;width:2px;height:10px;background:#1b1e22"></div>
<div class="a" style="left:41px;top:651.5px;width:16px;height:16px;background:#fff;border:1px solid #cfd3d7;border-radius:4px"></div>
<div class="a t " style="left:106.5px;top:650.26px;font-size:16px;line-height:20px;color:#212529"><u>206</u></div>
<div class="a" style="left:276px;top:628px;width:106px;height:38px;background:#e4e5ea;border-radius:7px"></div>
<div class="a t " style="left:289.5px;top:638.46px;font-size:16px;line-height:20px;color:#212529">Processing</div>
<div class="a" style="left:276px;top:666px;width:120px;height:24px;overflow:hidden"><div class="t" style="position:absolute;left:0;top:3px;line-height:20px;color:#000;white-space:nowrap;letter-spacing:0.5px">0614000104540</div></div>
<div class="a t " style="left:405px;top:650.26px;font-size:16px;line-height:20px;color:#212529">6/14/2024 5:05 PM</div>
<div class="a t " style="left:565px;top:650.26px;font-size:16px;line-height:20px;color:#212529"><u>Annika Test</u></div>
<div class="a t " style="left:694px;top:650.26px;font-size:16px;line-height:20px;color:#212529">CreditCard</div>
<div class="a t " style="left:822px;top:650.26px;font-size:16px;line-height:20px;color:#212529">Refunded</div>
<div class="a t " style="left:951px;top:650.26px;font-size:16px;line-height:20px;color:#eba43c"><b class="am">$795.30</b></div>
<div class="a t " style="left:1079.5px;top:650.26px;font-size:16px;line-height:20px;color:#2f8a1f"><b class="am">$795.30</b></div>
<div class="a t " style="left:1208.5px;top:650.26px;font-size:16px;line-height:20px;color:#2f8a1f"><b class="am">$0.00</b></div>
<div class="a t " style="left:1337px;top:650.26px;font-size:16px;line-height:20px;color:#2f8a1f"><b class="am">$<i class="o">1</i>98.83</b></div>
<div class="a" style="left:0;top:698px;width:1456px;height:78px;background:#ffffff"></div>
<div class="a" style="left:11px;top:737.0px;width:10px;height:2px;background:#1b1e22"></div>
<div class="a" style="left:15px;top:733.0px;width:2px;height:10px;background:#1b1e22"></div>
<div class="a" style="left:41px;top:729.5px;width:16px;height:16px;background:#fff;border:1px solid #cfd3d7;border-radius:4px"></div>
<div class="a t " style="left:106.5px;top:728.26px;font-size:16px;line-height:20px;color:#212529"><u>205</u></div>
<div class="a" style="left:181px;top:722.0px;width:31px;height:30px;background:#e4e5ea;border-radius:7px"></div>
<svg class="a" style="left:189.5px;top:732.0px" width="14" height="10" viewBox="0 0 14 10"><rect x="0" y="0" width="14" height="10" rx="1.2" fill="#1b1e22"/><path d="M1.2 1.3 L7 6 L12.8 1.3" stroke="#fff" stroke-width="0.8" fill="none"/><path d="M1.2 8.8 L5.2 5.2 M12.8 8.8 L8.8 5.2" stroke="#fff" stroke-width="0.7" fill="none"/></svg>
<div class="a" style="left:276px;top:706px;width:106px;height:38px;background:#e4e5ea;border-radius:7px"></div>
<div class="a t " style="left:289.5px;top:716.46px;font-size:16px;line-height:20px;color:#212529">Processing</div>
<div class="a" style="left:276px;top:744px;width:120px;height:24px;overflow:hidden"><div class="t" style="position:absolute;left:0;top:3px;line-height:20px;color:#000;white-space:nowrap;letter-spacing:0.5px">0614000104530</div></div>
<div class="a t " style="left:405px;top:728.26px;font-size:16px;line-height:20px;color:#212529">6/14/2024 4:20 PM</div>
<div class="a t " style="left:565px;top:728.26px;font-size:16px;line-height:20px;color:#212529"><u>Bugs Bunny</u></div>
<div class="a t " style="left:694px;top:728.26px;font-size:16px;line-height:20px;color:#212529">CreditCard</div>
<div class="a t " style="left:822px;top:728.26px;font-size:16px;line-height:20px;color:#212529">Paid</div>
<div class="a t " style="left:951px;top:728.26px;font-size:16px;line-height:20px;color:#eba43c"><b class="am">$<i class="o">1</i>,070.00</b></div>
<div class="a t " style="left:1079.5px;top:728.26px;font-size:16px;line-height:20px;color:#2f8a1f"><b class="am">$<i class="o">1</i>,600.00</b></div>
<div class="a t " style="left:1208.5px;top:728.26px;font-size:16px;line-height:20px;color:#2f8a1f"><b class="am">($530.00)</b></div>
<div class="a t " style="left:1337px;top:728.26px;font-size:16px;line-height:20px;color:#2f8a1f"><b class="am">$0.00</b></div>
<div class="a" style="left:32px;top:0;width:1px;height:760px;background:#e3e5e9"></div>
<div class="a" style="left:97px;top:0;width:1px;height:760px;background:#e3e5e9"></div>
<div class="a" style="left:167px;top:0;width:1px;height:760px;background:#e3e5e9"></div>
<div class="a" style="left:217px;top:0;width:1px;height:760px;background:#e3e5e9"></div>
<div class="a" style="left:267px;top:0;width:1px;height:760px;background:#e3e5e9"></div>
<div class="a" style="left:396px;top:0;width:1px;height:760px;background:#e3e5e9"></div>
<div class="a" style="left:556px;top:0;width:1px;height:760px;background:#e3e5e9"></div>
<div class="a" style="left:685px;top:0;width:1px;height:760px;background:#e3e5e9"></div>
<div class="a" style="left:813px;top:0;width:1px;height:760px;background:#e3e5e9"></div>
<div class="a" style="left:942px;top:0;width:1px;height:760px;background:#e3e5e9"></div>
<div class="a" style="left:1070px;top:0;width:1px;height:760px;background:#e3e5e9"></div>
<div class="a" style="left:1199px;top:0;width:1px;height:760px;background:#e3e5e9"></div>
<div class="a" style="left:1328px;top:0;width:1px;height:760px;background:#e3e5e9"></div>
</div>
<div class="a" style="left:280px;top:101px;width:1px;height:40px;background:#e3e5e9"></div>
<div class="a" style="left:345px;top:101px;width:1px;height:40px;background:#e3e5e9"></div>
<div class="a" style="left:415px;top:101px;width:1px;height:40px;background:#e3e5e9"></div>
<div class="a" style="left:465px;top:101px;width:1px;height:40px;background:#e3e5e9"></div>
<div class="a" style="left:515px;top:101px;width:1px;height:40px;background:#e3e5e9"></div>
<div class="a" style="left:644px;top:101px;width:1px;height:40px;background:#e3e5e9"></div>
<div class="a" style="left:804px;top:101px;width:1px;height:40px;background:#e3e5e9"></div>
<div class="a" style="left:933px;top:101px;width:1px;height:40px;background:#e3e5e9"></div>
<div class="a" style="left:1061px;top:101px;width:1px;height:40px;background:#e3e5e9"></div>
<div class="a" style="left:1190px;top:101px;width:1px;height:40px;background:#e3e5e9"></div>
<div class="a" style="left:1318px;top:101px;width:1px;height:40px;background:#e3e5e9"></div>
<div class="a" style="left:1447px;top:101px;width:1px;height:40px;background:#e3e5e9"></div>
<div class="a" style="left:1576px;top:101px;width:1px;height:40px;background:#e3e5e9"></div>
<div class="a" style="left:1704px;top:101px;width:1px;height:40px;background:#e3e5e9"></div>
<div class="a" style="left:289px;top:113px;width:16px;height:16px;background:#fff;border:1px solid #cfd3d7;border-radius:4px"></div>
<div class="a t " style="left:354.5px;top:112.66px;font-size:16px;line-height:20px;color:#212529">O.</div>
<svg class="a" style="left:382px;top:115px" width="13" height="13" viewBox="0 0 13 13"><path d="M0 0 H13 L8 5.8 V13 L5 10.8 V5.8 Z" fill="#1b1e22"/></svg>
<div class="a t " style="left:524.5px;top:112.66px;font-size:16px;line-height:20px;color:#212529">Order S...</div>
<svg class="a" style="left:610px;top:115px" width="13" height="13" viewBox="0 0 13 13"><path d="M0 0 H13 L8 5.8 V13 L5 10.8 V5.8 Z" fill="#1b1e22"/></svg>
<div class="a t " style="left:653px;top:112.66px;font-size:16px;line-height:20px;color:#212529">Created on</div>
<svg class="a" style="left:770px;top:115px" width="13" height="13" viewBox="0 0 13 13"><path d="M0 0 H13 L8 5.8 V13 L5 10.8 V5.8 Z" fill="#1b1e22"/></svg>
<div class="a t " style="left:813px;top:112.66px;font-size:16px;line-height:20px;color:#212529">Customer</div>
<svg class="a" style="left:899px;top:115px" width="13" height="13" viewBox="0 0 13 13"><path d="M0 0 H13 L8 5.8 V13 L5 10.8 V5.8 Z" fill="#1b1e22"/></svg>
<div class="a t " style="left:942px;top:112.66px;font-size:16px;line-height:20px;color:#212529">Paymen...</div>
<svg class="a" style="left:1028px;top:115px" width="13" height="13" viewBox="0 0 13 13"><path d="M0 0 H13 L8 5.8 V13 L5 10.8 V5.8 Z" fill="#1b1e22"/></svg>
<div class="a t " style="left:1070px;top:112.66px;font-size:16px;line-height:20px;color:#212529">Paymen...</div>
<svg class="a" style="left:1156px;top:115px" width="13" height="13" viewBox="0 0 13 13"><path d="M0 0 H13 L8 5.8 V13 L5 10.8 V5.8 Z" fill="#1b1e22"/></svg>
<div class="a t " style="left:1199px;top:112.66px;font-size:16px;line-height:20px;color:#212529">Order T...</div>
<svg class="a" style="left:1284.5px;top:115px" width="13" height="13" viewBox="0 0 13 13"><path d="M0 0 H13 L8 5.8 V13 L5 10.8 V5.8 Z" fill="#1b1e22"/></svg>
<div class="a t " style="left:1327.5px;top:112.66px;font-size:16px;line-height:20px;color:#212529">Paid</div>
<svg class="a" style="left:1413px;top:115px" width="13" height="13" viewBox="0 0 13 13"><path d="M0 0 H13 L8 5.8 V13 L5 10.8 V5.8 Z" fill="#1b1e22"/></svg>
<div class="a t " style="left:1456.5px;top:112.66px;font-size:16px;line-height:20px;color:#212529">Due</div>
<svg class="a" style="left:1542px;top:115px" width="13" height="13" viewBox="0 0 13 13"><path d="M0 0 H13 L8 5.8 V13 L5 10.8 V5.8 Z" fill="#1b1e22"/></svg>
<div class="a t " style="left:1585px;top:112.66px;font-size:16px;line-height:20px;color:#212529">Discount</div>
<svg class="a" style="left:1670.5px;top:115px" width="13" height="13" viewBox="0 0 13 13"><path d="M0 0 H13 L8 5.8 V13 L5 10.8 V5.8 Z" fill="#1b1e22"/></svg>
<div class="a" style="left:1704px;top:142px;width:5px;height:760px;background:#f0f0f0"></div>
<div class="a" style="left:1704px;top:142px;width:5px;height:433px;background:#858585;border-radius:3px"></div>
<div class="a" style="left:248px;top:902px;width:1461px;height:1px;background:#dee2e6"></div>
<div class="a" style="left:248px;top:903px;width:1461px;height:54px;background:#f8f9fa"></div>
<div class="a" style="left:248px;top:957px;width:1462px;height:1px;background:#dee2e6"></div>
<div class="a" style="left:342px;top:911px;width:38px;height:38px;background:#cbdcf6"></div>
<div class="a t" style="left:341.5px;top:921.3px;width:38px;text-align:center;line-height:20px;color:#3470d6">1</div>
<div class="a t" style="left:379.7px;top:921.3px;width:38px;text-align:center;line-height:20px;color:#3470d6">2</div>
<div class="a t" style="left:418px;top:921.3px;width:38px;text-align:center;line-height:20px;color:#3470d6">3</div>
<div class="a t" style="left:455.8px;top:921.3px;width:38px;text-align:center;line-height:20px;color:#3470d6">4</div>
<div class="a t" style="left:494px;top:921.3px;width:38px;text-align:center;line-height:20px;color:#3470d6">5</div>
<div class="a t" style="left:531.7px;top:921.3px;width:38px;text-align:center;line-height:20px;color:#3470d6">6</div>
<div class="a t" style="left:570px;top:921.3px;width:38px;text-align:center;line-height:20px;color:#3470d6">7</div>
<svg class="a" style="left:275.5px;top:926px" width="8" height="8" viewBox="0 0 8 8"><path d="M0.6 0 V8" stroke="#666" stroke-width="1.2"/><path d="M7.5 0 L2.4 4 L7.5 8 Z" fill="#666"/></svg>
<svg class="a" style="left:320.5px;top:926px" width="6" height="8" viewBox="0 0 6 8"><path d="M5.6 0 L0 4 L5.6 8 Z" fill="#666"/></svg>
<svg class="a" style="left:629px;top:926px" width="6" height="8" viewBox="0 0 6 8"><path d="M0 0 L5.6 4 L0 8 Z" fill="#1b1e22"/></svg>
<svg class="a" style="left:671px;top:926px" width="8" height="8" viewBox="0 0 8 8"><path d="M0 0 L5.2 4 L0 8 Z" fill="#1b1e22"/><path d="M6.6 0 V8" stroke="#1b1e22" stroke-width="1.2"/></svg>
<div class="a t" style="left:1500px;top:921px;width:201px;text-align:right;line-height:20px;color:#212529;letter-spacing:0.16px">1 - 20 of 134 items</div>
<div class="a" style="left:330px;top:146px;width:60px;height:60px;border-radius:50%;background:rgba(232,80,160,0.45);border:4px solid rgba(232,60,150,0.85)"></div>
<svg class="a" style="left:355px;top:172px" width="45" height="65" viewBox="355 172 45 65"><path d="M360.3 177 L360.3 225.8 L370.4 216.5 L380 231.8 L389.9 226.6 L381.2 211.6 L395.4 211.6 Z" fill="rgba(255,85,72,0.88)"/><path d="M363.8 184 L363.8 220.5 L371 213.4 L380 228.2 L385.2 224.6 L378.6 210.3 L386.8 207.8 Z" fill="rgba(212,24,68,0.82)"/></svg>
</div></body></html>
